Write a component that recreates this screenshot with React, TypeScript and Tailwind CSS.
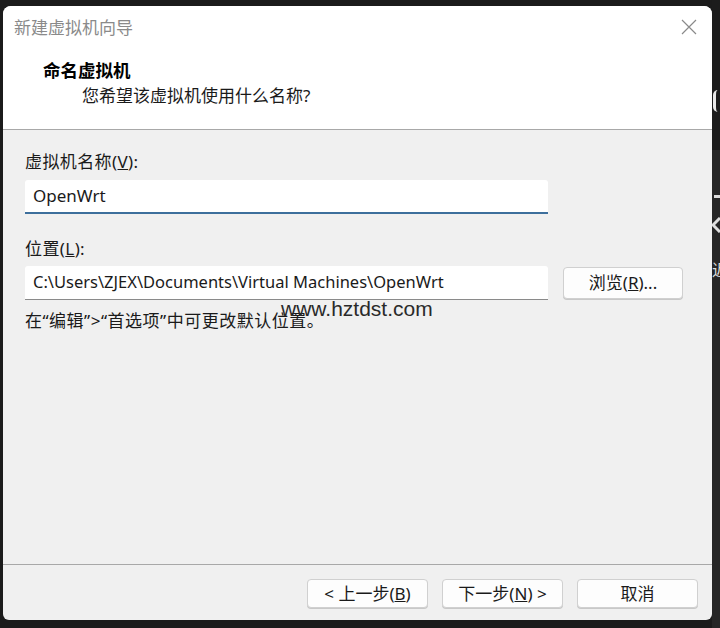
import React from "react";

const cjk = { fontFamily: '"Noto Sans", "Noto Sans CJK SC", sans-serif' };

function Btn({ children, className = "" }: { children: React.ReactNode; className?: string }) {
  return (
    <div
      className={`flex items-center justify-center rounded-[4px] border border-[#d0d0d0] bg-[#fdfdfd] text-[17px] text-[#1a1a1a] shadow-[0_1px_0_#c8c8c8] ${className}`}
    >
      {children}
    </div>
  );
}

export default function App() {
  return (
    <div className="flex h-[628px] w-[720px] overflow-hidden bg-[#1b1b1b] pl-[3px] pt-[6px]" style={cjk}>
      <div className="flex h-[614px] w-[709px] shrink-0 flex-col overflow-hidden rounded-t-[8px] rounded-b-[6px] bg-[#f0f0f0]">
        {/* header */}
        <div className="flex h-[124px] flex-col border-b border-[#a8a8a8] bg-white">
          <div className="flex h-[44px] items-center justify-between pl-[11px] pr-[14px]">
            <span className="text-[17px] text-[#8a8a8a]">新建虚拟机向导</span>
            <svg width="18" height="18" viewBox="0 0 18 18" className="mt-[-2px]">
              <path d="M2 2 L16 16 M16 2 L2 16" stroke="#8a8a8a" strokeWidth="1.2" fill="none" />
            </svg>
          </div>
          <div className="pl-[40px] pt-[9px] text-[17.5px] font-bold leading-[22px] text-black">命名虚拟机</div>
          <div className="pl-[79px] pt-[4px] text-[17px] leading-[22px] text-[#1a1a1a]">您希望该虚拟机使用什么名称?</div>
        </div>

        {/* body */}
        <div className="flex flex-1 flex-col border-b border-[#a8a8a8] pl-[22px] pt-[22px] text-[17px] text-[#1a1a1a]">
          <div className="leading-[20px] tracking-[0.4px]">
            虚拟机名称(<span className="underline">V</span>):
          </div>
          <div className="mt-[8px] flex h-[34px] w-[523px] items-center rounded-t-[3px] border-b-2 border-[#3d6f9c] bg-white pl-[8px] text-[17px]">
            OpenWrt
          </div>
          <div className="mt-[25px] leading-[20px] tracking-[0.4px]">
            位置(<span className="underline">L</span>):
          </div>
          <div className="mt-[7px] flex items-center">
            <div className="flex h-[34px] w-[523px] items-center rounded-t-[3px] border-b border-[#8a8a8a] bg-white pl-[8px] text-[16.5px]">
              C:\Users\ZJEX\Documents\Virtual Machines\OpenWrt
            </div>
            <Btn className="ml-[15px] h-[32px] w-[120px]">
              浏览(<span className="underline">R</span>)...
            </Btn>
          </div>
          <div className="relative mt-[11px] leading-[20px] tracking-[0.5px]">
            在“编辑”&gt;“首选项”中可更改默认位置。
            <span
              className="absolute left-[256px] top-[-14px] text-[21px] leading-[24px] tracking-normal text-[#2a2a2a]"
              style={{ fontFamily: '"Liberation Sans", sans-serif' }}
            >
              www.hztdst.com
            </span>
          </div>
        </div>

        {/* footer */}
        <div className="flex h-[55px] items-start justify-end gap-[14px] pr-[14px] pt-[14px]">
          <Btn className="h-[29px] w-[121px]">
            &lt; 上一步(<span className="underline">B</span>)
          </Btn>
          <Btn className="h-[29px] w-[121px]">
            下一步(<span className="underline">N</span>) &gt;
          </Btn>
          <Btn className="h-[29px] w-[121px]">取消</Btn>
        </div>
      </div>

      {/* strip of the window behind */}
      <div className="relative mt-[-6px] h-[628px] w-[8px] shrink-0 overflow-hidden">
        <div className="h-[150px] bg-[#1c1c1c]" />
        <div className="h-[478px] bg-[#262626]" />
        <div className="absolute left-[1px] top-[90px] h-[22px] w-[10px] rounded-full border-l-[3px] border-[#e8e8e8]" />
        <div className="absolute left-[2px] top-[195px] h-[3px] w-[6px] bg-[#dcdcdc]" />
        <svg className="absolute left-[0px] top-[217px]" width="8" height="16" viewBox="0 0 8 16">
          <path d="M8 1 L1 8 L8 15" stroke="#e0e0e0" strokeWidth="3" fill="none" />
        </svg>
        <span className="absolute left-[0px] top-[260px] text-[16px] leading-[20px] text-[#dcdcdc]">近</span>
      </div>
    </div>
  );
}
